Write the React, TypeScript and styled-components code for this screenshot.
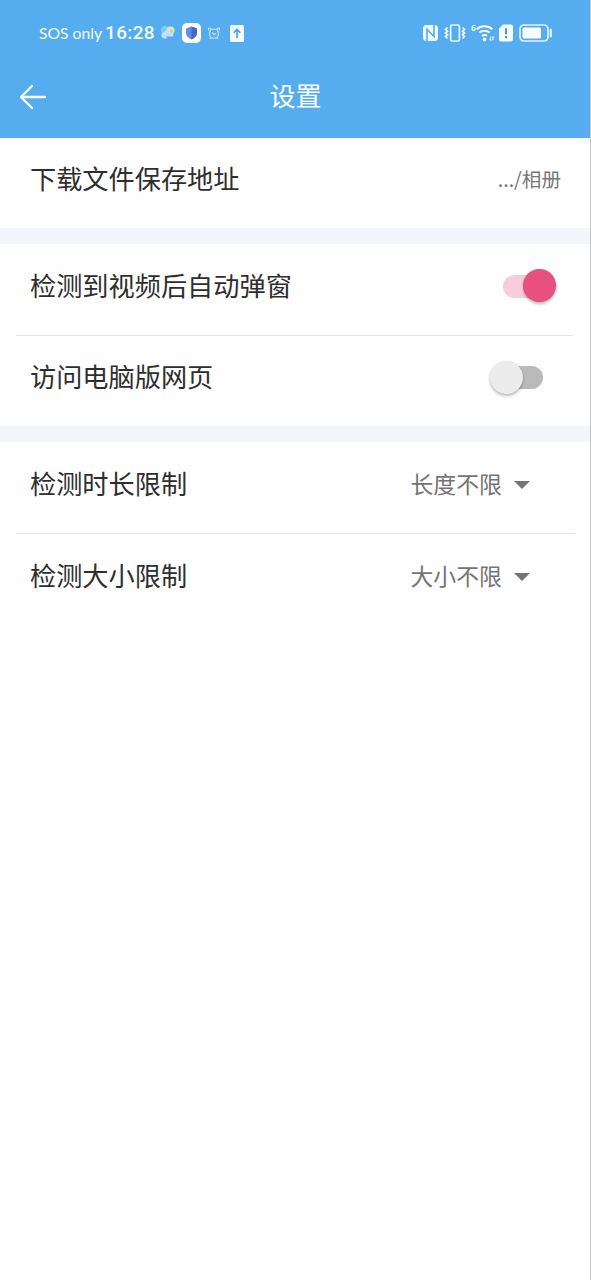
import React from 'react';
import styled, { createGlobalStyle } from 'styled-components';

const GlobalStyle = createGlobalStyle`
  * { box-sizing: border-box; }
  body {
    margin: 0;
    background: #fff;
    font-family: "Noto Sans CJK SC", sans-serif;
  }
`;

const Screen = styled.div`
  width: 591px;
  height: 1280px;
  background: #fefefe;
  display: flex;
  flex-direction: column;
  border-right: 1px solid #c3c5c8;
  overflow: hidden;
`;

const Header = styled.header`
  flex: none;
  height: 138px;
  background: #55acee;
  color: #fff;
`;

const StatusBar = styled.div`
  height: 66px;
  padding: 0 37px 0 39px;
  display: flex;
  align-items: center;
  justify-content: space-between;
`;

const StatusGroup = styled.div`
  display: flex;
  align-items: center;
`;

const Carrier = styled.span`
  width: 66px;
  font: 400 15.7px/20px Lato, sans-serif;
  white-space: nowrap;
  color: #f2faff;
`;

const Clock = styled.span`
  width: 55px;
  font: 500 19px/24px Roboto, sans-serif;
  letter-spacing: 0.35px;
  color: #f4fbff;
`;

const Glyph = styled.svg<{ $gap?: number }>`
  display: block;
  flex: none;
  margin-left: ${(p) => p.$gap ?? 0}px;
`;

const TitleBar = styled.div`
  height: 62px;
  display: grid;
  grid-template-columns: 60px 1fr 59px;
  align-items: center;
`;

const BackButton = styled.button`
  border: 0;
  background: none;
  padding: 0 0 0 18px;
  height: 60px;
  display: flex;
  align-items: center;
`;

const Title = styled.h1`
  margin: 0 0 5px;
  text-align: center;
  font-size: 26px;
  line-height: 36px;
  font-weight: 400;
`;

const Section = styled.section`
  flex: none;
`;

const Band = styled.div`
  flex: none;
  height: 16px;
  background: #f2f6fa;
`;

const Divider = styled.hr<{ $right: number }>`
  border: 0;
  height: 1px;
  margin: 0 ${(p) => p.$right}px 0 16px;
  background: #e6e6e6;
`;

const Row = styled.div<{ $height: number; $right: number }>`
  height: ${(p) => p.$height}px;
  padding: 0 ${(p) => p.$right}px 7px 30px;
  display: flex;
  align-items: center;
  justify-content: space-between;
`;

const Label = styled.span`
  margin-bottom: 3px;
  font-size: 26.2px;
  line-height: 38px;
  color: #2e2e2e;
`;

const Path = styled.span`
  margin-bottom: 2px;
  font-size: 19.6px;
  line-height: 28px;
  color: #777;
`;

const Select = styled.div`
  display: flex;
  align-items: center;
  gap: 12px;
  margin-bottom: 2px;
  font-size: 22.9px;
  line-height: 34px;
  color: #747474;
`;

const Caret = styled.span`
  margin-top: 3px;
  border: 8px solid transparent;
  border-top-color: #747474;
  border-bottom: 0;
`;

const Switch = styled.div<{ $on: boolean }>`
  width: 53px;
  height: 34px;
  display: flex;
  align-items: center;
  justify-content: ${(p) => (p.$on ? 'flex-end' : 'flex-start')};
`;

const Track = styled.span<{ $on: boolean }>`
  order: ${(p) => (p.$on ? 0 : 1)};
  width: 40px;
  height: 23px;
  margin: ${(p) => (p.$on ? '0 -20px 0 0' : '0 0 0 -20px')};
  border-radius: 12px;
  background: ${(p) => (p.$on ? '#f7cddb' : '#bababa')};
`;

const Thumb = styled.span<{ $on: boolean }>`
  width: 33px;
  height: 33px;
  margin-bottom: 1px;
  z-index: 1;
  border-radius: 50%;
  background: ${(p) => (p.$on ? '#e7507f' : '#ececec')};
  box-shadow: 0 2px 3px rgba(0, 0, 0, 0.26), 0 0 1px rgba(0, 0, 0, 0.15);
`;

function Toggle({ on }: { on: boolean }) {
  return (
    <Switch $on={on} role="switch" aria-checked={on}>
      <Track $on={on} />
      <Thumb $on={on} />
    </Switch>
  );
}

function Dropdown({ value }: { value: string }) {
  return (
    <Select>
      {value}
      <Caret />
    </Select>
  );
}

function WeatherIcon() {
  return (
    <Glyph width="16" height="16" viewBox="0 0 16 16">
      <circle cx="5" cy="5" r="4.2" fill="#78cdf4" />
      <circle cx="10.5" cy="5.5" r="4" fill="#d9e5c5" />
      <circle cx="11.5" cy="6" r="1.7" fill="#f0c476" />
      <path d="M4 13.5a3.2 3.2 0 0 1 0-6.3 4.4 4.4 0 0 1 7.500 1 2.800 2.800 0 0 1 0 5.300z" fill="#b8e4fb" />
      <path d="M6 11.500h8a3 3 0 0 1-3 3H7.500z" fill="#6b9df0" />
    </Glyph>
  );
}

function ShieldIcon() {
  return (
    <Glyph $gap={6} width="19" height="20" viewBox="0 0 19 20">
      <rect width="19" height="20" rx="5" fill="#fff" />
      <path d="M9.500 3.500 15 5.500v4.200c0 3.200-2.200 5.400-5.500 6.800C6.200 15.100 4 12.900 4 9.700V5.500z" fill="#6b87e8" />
      <path d="M9.500 3.500 15 5.500v4.200c0 3.200-2.200 5.400-5.500 6.800z" fill="#4766c9" />
    </Glyph>
  );
}

function AlarmIcon() {
  return (
    <Glyph $gap={7} width="12" height="13" viewBox="0 0 12 13" fill="none" stroke="#c5e6fc" strokeWidth="1.100">
      <path d="M.6 3.500V1.200h2.600M11.400 3.500V1.200H8.800M3 2.200h6L10.300 5v3.500L8.500 11h-5L1.700 8.500V5z" />
      <path d="M4 5.500 6 7.500l2-1M2.800 10.800l-1 1.200M9.200 10.800l1 1.200" />
    </Glyph>
  );
}

function UploadIcon() {
  return (
    <Glyph $gap={10} width="14" height="17" viewBox="0 0 14 17">
      <rect width="14" height="17" rx="1.500" fill="#f5fbff" />
      <path d="M7 13V4.500M3.700 7.800 7 4.500l3.300 3.300" fill="none" stroke="#4a9ddd" strokeWidth="1.600" />
    </Glyph>
  );
}

function NfcIcon() {
  return (
    <Glyph width="15" height="16" viewBox="0 0 15 16">
      <rect width="15" height="16" rx="3.500" fill="#f2faff" />
      <path d="M4 16V4.200l7 7.300V0" fill="none" stroke="#55acee" strokeWidth="1.600" />
    </Glyph>
  );
}

function VibrateIcon() {
  return (
    <Glyph $gap={6} width="22" height="18" viewBox="0 0 22 18" fill="none" stroke="#edf8ff" strokeWidth="1.700">
      <rect x="6.600" y="1" width="8.800" height="16" rx="1.500" />
      <path d="M3.500 3.500 1.500 5.500l2 1.700-2 1.800 2 1.700-2 1.800 2 2M18.500 3.500l2 2-2 1.700 2 1.800-2 1.700 2 1.800-2 2" />
    </Glyph>
  );
}

const WifiLevel = styled.span`
  align-self: flex-start;
  margin: -1px 0 0 5px;
  width: 5px;
  font: 600 8.5px/9px "Noto Sans", sans-serif;
`;

function WifiIcon() {
  return (
    <Glyph width="19" height="18" viewBox="0 0 19 18" fill="none" stroke="#f4fbff" strokeWidth="2">
      <path d="M.7 5.200a11.700 11.700 0 0 1 15.600 0M3.300 8.600a7.900 7.900 0 0 1 10.400 0M5.900 12a4.100 4.100 0 0 1 5.200 0" />
      <circle cx="8.500" cy="15.500" r="1.900" fill="#f4fbff" stroke="none" />
      <path d="M14.800 12.500v4M13.500 15l1.300 1.500M17 16.500v-4l1.300 1.500" strokeWidth="1" />
    </Glyph>
  );
}

function SimAlertIcon() {
  return (
    <Glyph $gap={4} width="14" height="18" viewBox="0 0 14 18">
      <path d="M4 .5h8A2 2 0 0 1 14 2.500v13a2 2 0 0 1-2 2H2a2 2 0 0 1-2-2V4.500z" fill="#f5fbff" />
      <path d="M7 4.200v6M7 12v2.200" stroke="#438fcd" strokeWidth="1.900" />
    </Glyph>
  );
}

function BatteryIcon() {
  return (
    <Glyph $gap={6} width="34" height="18" viewBox="0 0 34 18">
      <rect x="1" y="1" width="28" height="16" rx="4" fill="none" stroke="#e2f3ff" strokeWidth="1.700" />
      <rect x="3.500" y="3.500" width="18.500" height="11" rx="1.500" fill="#f8fcff" />
      <path d="M31.800 5.500v7" stroke="#e2f3ff" strokeWidth="2.200" strokeLinecap="round" />
    </Glyph>
  );
}

export default function App() {
  return (
    <>
      <GlobalStyle />
      <Screen>
        <Header>
          <StatusBar>
            <StatusGroup>
              <Carrier>SOS only</Carrier>
              <Clock>16:28</Clock>
              <WeatherIcon />
              <ShieldIcon />
              <AlarmIcon />
              <UploadIcon />
            </StatusGroup>
            <StatusGroup>
              <NfcIcon />
              <VibrateIcon />
              <WifiLevel>6</WifiLevel>
              <WifiIcon />
              <SimAlertIcon />
              <BatteryIcon />
            </StatusGroup>
          </StatusBar>
          <TitleBar>
            <BackButton aria-label="返回">
              <svg width="30" height="28" viewBox="0 0 30 28" fill="none" stroke="#fff" strokeWidth="2.300" strokeLinecap="round" strokeLinejoin="round">
                <path d="M27 14H3M14 3 3 14l11 11" />
              </svg>
            </BackButton>
            <Title>设置</Title>
          </TitleBar>
        </Header>
        <Section>
          <Row $height={90} $right={29}>
            <Label>下载文件保存地址</Label>
            <Path>.../相册</Path>
          </Row>
        </Section>
        <Band />
        <Section>
          <Row $height={91} $right={34}>
            <Label>检测到视频后自动弹窗</Label>
            <Toggle on />
          </Row>
          <Divider $right={17} />
          <Row $height={90} $right={47}>
            <Label>访问电脑版网页</Label>
            <Toggle on={false} />
          </Row>
        </Section>
        <Band />
        <Section>
          <Row $height={91} $right={60}>
            <Label>检测时长限制</Label>
            <Dropdown value="长度不限" />
          </Row>
          <Divider $right={15} />
          <Row $height={91} $right={60}>
            <Label>检测大小限制</Label>
            <Dropdown value="大小不限" />
          </Row>
        </Section>
      </Screen>
    </>
  );
}
